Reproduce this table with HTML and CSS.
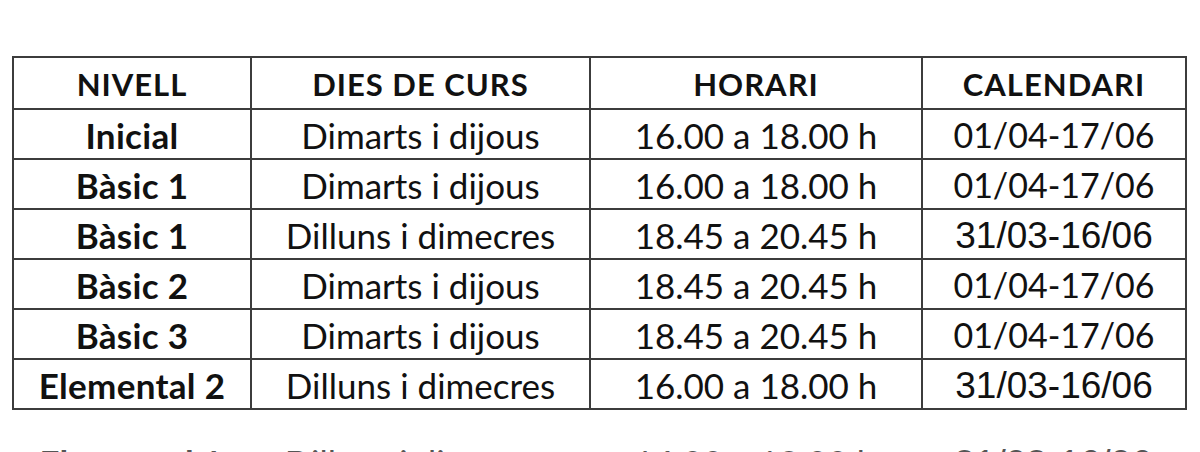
FILE: index.html
```html
<!DOCTYPE html>
<html lang="ca">
<head>
<meta charset="utf-8">
<title>Horaris</title>
<link rel="stylesheet" href="styles.css">
</head>
<body>
<div class="page">
  <table class="sched">
    <colgroup>
      <col class="c1"><col class="c2"><col class="c3"><col class="c4">
    </colgroup>
    <thead>
      <tr><th>NIVELL</th><th>DIES DE CURS</th><th>HORARI</th><th>CALENDARI</th></tr>
    </thead>
    <tbody>
      <tr><td class="lvl">Inicial</td><td>Dimarts i dijous</td><td>16.00 a 18.00 h</td><td class="date">01/04‑17/06</td></tr>
      <tr><td class="lvl">Bàsic 1</td><td>Dimarts i dijous</td><td>16.00 a 18.00 h</td><td class="date">01/04‑17/06</td></tr>
      <tr><td class="lvl">Bàsic 1</td><td>Dilluns i dimecres</td><td>18.45 a 20.45 h</td><td class="arial">31/03-16/06</td></tr>
      <tr><td class="lvl">Bàsic 2</td><td>Dimarts i dijous</td><td>18.45 a 20.45 h</td><td class="date">01/04‑17/06</td></tr>
      <tr><td class="lvl">Bàsic 3</td><td>Dimarts i dijous</td><td>18.45 a 20.45 h</td><td class="date">01/04‑17/06</td></tr>
      <tr><td class="lvl">Elemental 2</td><td>Dilluns i dimecres</td><td>16.00 a 18.00 h</td><td class="arial">31/03-16/06</td></tr>
    </tbody>
  </table>
  <div class="ghost">
    <span class="g1">Elemental 1</span>
    <span class="g2">Dilluns i dimecres</span>
    <span class="g3">16.00 a 18.00 h</span>
    <span class="g4">31/03-16/06</span>
  </div>
</div>
</body>
</html>
```
FILE: styles.css
```css
html, body {
  margin: 0;
  padding: 0;
  background: #ffffff;
}
.page {
  width: 1200px;
  height: 452px;
  overflow: hidden;
  padding: 56px 0 0 12px;
  box-sizing: border-box;
  font-family: Lato, "Open Sans", sans-serif;
  color: #111111;
}
.sched {
  border-collapse: collapse;
  table-layout: fixed;
  width: 1173px;
}
.c1 { width: 238px; }
.c2 { width: 339px; }
.c3 { width: 332px; }
.c4 { width: 264px; }
.sched th,
.sched td {
  border: 2px solid #3c3c3c;
  text-align: center;
  padding: 2px 0 0 0;
  height: 46px;
  font-size: 35px;
  line-height: 1;
  white-space: nowrap;
}
.sched th {
  font-weight: 700;
  font-size: 31px;
  letter-spacing: 1px;
  height: 48px;
}
.sched td { font-weight: 400; }
.sched td.lvl {
  font-weight: 700;
  letter-spacing: 0.3px;
}
.sched td.date {
  font-size: 34px;
}
.sched td.arial {
  font-family: "Liberation Sans", Arial, sans-serif;
  font-size: 37px;
}
.ghost {
  display: grid;
  grid-template-columns: 238px 339px 332px 264px;
  margin-top: 34.5px;
  font-size: 35px;
  line-height: 1;
  color: #555555;
  text-align: center;
}
.g1 { font-weight: 700; }
.g4 { font-family: "Liberation Sans", Arial, sans-serif; font-size: 37px; }
```
